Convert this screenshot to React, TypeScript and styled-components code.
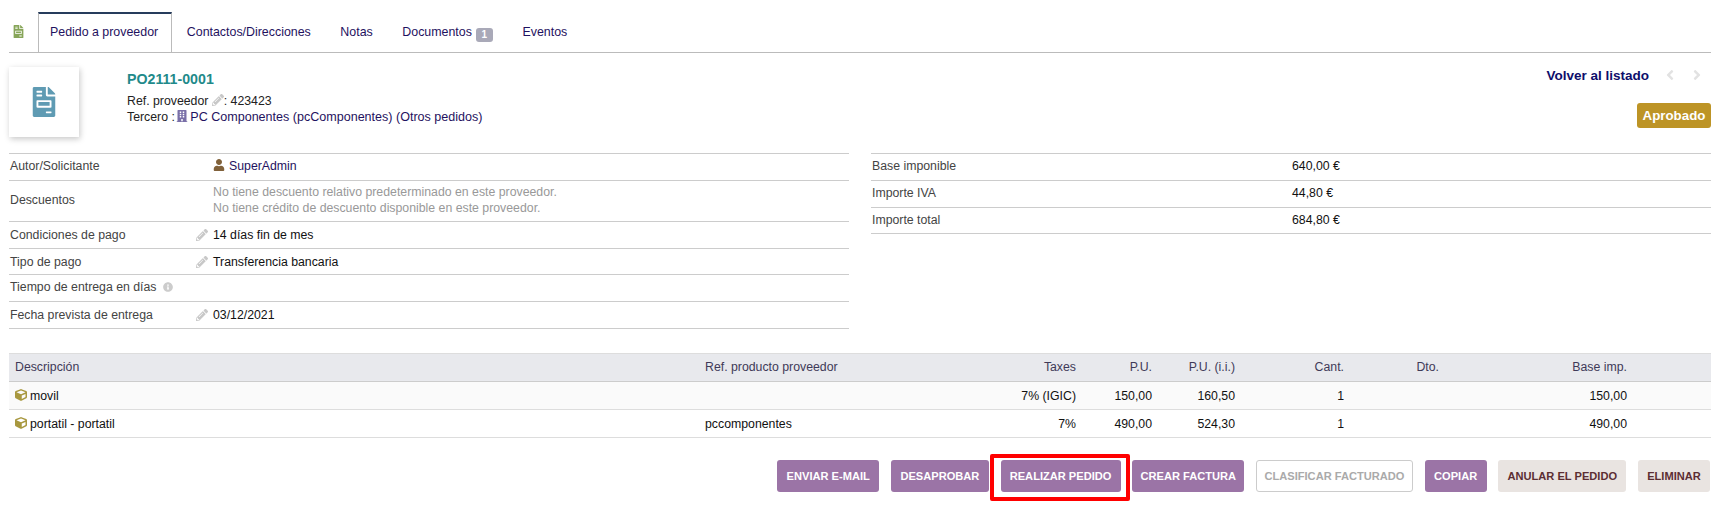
import React from "react";
import styled, { createGlobalStyle } from "styled-components";
import {
    FaAngleLeft,
    FaAngleRight,
    FaBuilding,
    FaCube,
    FaFileInvoice,
    FaInfoCircle,
    FaPencilAlt,
    FaUser,
} from "react-icons/fa";

const GlobalStyle = createGlobalStyle`
    html, body {
        margin: 0;
        padding: 0;
        background: #fff;
        font-family: "Liberation Sans", Arial, sans-serif;
        font-size: 12.3px;
        color: #222;
    }
`;

// product table columns
const lineColumns = "690px 305px 78px 76px 83px 109px 95px 188px 78px";

const Page = styled.div`
    width: 1726px;
    height: 518px;
    padding: 12px 15px 0 9px;
    box-sizing: border-box;
    overflow: hidden;
`;

const Tabs = styled.div`
    display: flex;
    align-items: flex-end;
    height: 40px;
    border-bottom: 1px solid #bbb;
    font-size: 12.4px;
`;

const TabLogo = styled.div`
    width: 29px;
    height: 100%;
    box-sizing: border-box;
    padding: 13px 0 0 3px;
    color: #87a559;
    font-size: 13px;
    svg {
        display: block;
    }
`;

const Tab = styled.div<{ $active?: boolean }>`
    height: 100%;
    box-sizing: border-box;
    padding: ${(p) => (p.$active ? "11px 0 0 11px" : "11px 13.8px 0")};
    ${(p) => (p.$active ? "width: 134px;" : "")}
    color: #1f1260;
    white-space: nowrap;
    border-top: 2px solid ${(p) => (p.$active ? "#263c5c" : "transparent")};
    border-left: 1px solid ${(p) => (p.$active ? "#bbb" : "transparent")};
    border-right: 1px solid ${(p) => (p.$active ? "#bbb" : "transparent")};
`;

const Badge = styled.span`
    display: inline-block;
    margin-left: 4px;
    width: 17px;
    text-align: center;
    border-radius: 3px;
    background: #a9a9b8;
    color: #fff;
    font-size: 10px;
    font-weight: bold;
    line-height: 14px;
    vertical-align: -2px;
`;

const Banner = styled.div`
    display: flex;
    height: 100px;
    padding-top: 14px;
    box-sizing: border-box;
`;

const Thumb = styled.div`
    width: 70px;
    height: 70px;
    display: flex;
    align-items: center;
    justify-content: center;
    color: #5f9bb3;
    font-size: 30px;
    box-shadow: 1px 2px 6px rgba(0, 0, 0, 0.22);
`;

const Ref = styled.div`
    margin-left: 48px;
    padding-top: 4px;
    flex: 1;
    line-height: 16px;
`;

const RefTitle = styled.div`
    color: #1f8a8a;
    font-size: 14.2px;
    font-weight: bold;
    line-height: 16px;
    margin-bottom: 6px;
`;

const Link = styled.span`
    color: #1f1260;
`;

const ThirdParty = styled(Link)`
    font-size: 12.55px;
`;

const Pencil = styled(FaPencilAlt)`
    color: #c8c8c8;
    font-size: 12px;
    vertical-align: -1px;
`;

const Company = styled(FaBuilding)`
    color: #7a70a8;
    font-size: 12px;
    vertical-align: -1px;
    margin: 0 2px 0 -2px;
`;

const Nav = styled.div`
    display: flex;
    flex-direction: column;
    align-items: flex-end;
`;

const BackRow = styled.div`
    display: flex;
    align-items: center;
    height: 16px;
    color: #0e0e6b;
    font-size: 13.5px;
    font-weight: bold;
`;

const Arrows = styled.span`
    display: flex;
    gap: 11px;
    margin: 0 6px 0 13px;
    color: #e2e2e2;
    font-size: 16px;
`;

const Status = styled.div`
    margin-top: 20px;
    width: 74px;
    text-align: center;
    height: 25px;
    line-height: 25px;
    border-radius: 3px;
    background: #bd9426;
    color: #fff;
    font-size: 13.3px;
    font-weight: bold;
`;

const Summary = styled.div`
    display: grid;
    grid-template-columns: 840px 840px;
    justify-content: space-between;
    align-items: start;
`;

const FieldList = styled.div`
    border-top: 1px solid #ccc;
`;

const Field = styled.div<{ $h: number; $valueAt: number; $up?: boolean }>`
    display: grid;
    grid-template-columns: ${(p) => p.$valueAt}px 1fr;
    align-items: center;
    height: ${(p) => p.$h}px;
    box-sizing: border-box;
    border-bottom: 1px solid #ccc;
    padding-left: 1px;
    padding-bottom: ${(p) => (p.$up ? "2px" : "0")};
    color: #444;
`;

const Value = styled.div<{ $dim?: boolean }>`
    color: ${(p) => (p.$dim ? "#999" : "#111")};
    line-height: 16px;
    white-space: nowrap;
`;

const EditValue = styled(Value)`
    margin-left: -17px;
    display: flex;
    align-items: center;
    gap: 5px;
`;

const Person = styled(FaUser)`
    color: #80613a;
    font-size: 12px;
    vertical-align: -1px;
    margin-right: 4px;
`;

const Hint = styled(FaInfoCircle)`
    color: #ccc;
    font-size: 10px;
    margin-left: 6px;
    vertical-align: -1px;
`;

const Lines = styled.div`
    margin-top: 24px;
    border-top: 1px solid #ddd;
`;

const LineRow = styled.div<{ $kind: "head" | "odd" | "even" }>`
    display: grid;
    grid-template-columns: ${lineColumns};
    align-items: center;
    height: 28px;
    box-sizing: border-box;
    padding-bottom: ${(p) => (p.$kind === "head" ? "2px" : "0")};
    border-bottom: 1px solid ${(p) => (p.$kind === "head" ? "#ccc" : "#ddd")};
    background: ${(p) => (p.$kind === "head" ? "#e8e9ed" : p.$kind === "odd" ? "#fafafa" : "#fff")};
    color: ${(p) => (p.$kind === "head" ? "#3f3a58" : "#111")};
`;

const Cell = styled.div<{ $right?: boolean }>`
    padding: 0 6px;
    text-align: ${(p) => (p.$right ? "right" : "left")};
    white-space: nowrap;
`;

const Product = styled(FaCube)`
    color: #a8983f;
    font-size: 12px;
    vertical-align: -1px;
    margin-right: 3px;
`;

const Actions = styled.div`
    display: flex;
    justify-content: flex-end;
    gap: 11.7px;
    margin: 22px 1px 0 0;
`;

const Action = styled.div<{ $w: number; $kind?: "primary" | "off" | "danger"; $marked?: boolean }>`
    position: relative;
    width: ${(p) => p.$w}px;
    height: 32px;
    line-height: 32px;
    border-radius: 3px;
    box-sizing: border-box;
    text-align: center;
    font-size: 11.1px;
    font-weight: bold;
    white-space: nowrap;
    background: ${(p) => (p.$kind === "off" ? "#fff" : p.$kind === "danger" ? "#e9e4e1" : "#9b74a6")};
    color: ${(p) => (p.$kind === "off" ? "#aaa" : p.$kind === "danger" ? "#5c2e33" : "#fff")};
    ${(p) => (p.$kind === "off" ? "border: 1px solid #ccc; line-height: 30px;" : "")}
    ${(p) =>
        p.$marked
            ? `&::after {
                content: "";
                position: absolute;
                top: -6px;
                left: -11px;
                right: -9px;
                bottom: -9px;
                border: 4px solid #f00;
                border-radius: 2px;
            }`
            : ""}
`;

const fields = [
    { label: "Base imponible", value: "640,00 €", h: 27 },
    { label: "Importe IVA", value: "44,80 €", h: 27 },
    { label: "Importe total", value: "684,80 €", h: 26 },
];

const lines = [
    { kind: "odd" as const, name: "movil", ref: "", tax: "7% (IGIC)", pu: "150,00", pui: "160,50", qty: "1", total: "150,00" },
    { kind: "even" as const, name: "portatil - portatil", ref: "pccomponentes", tax: "7%", pu: "490,00", pui: "524,30", qty: "1", total: "490,00" },
];

export default function App() {
    return (
        <Page>
            <GlobalStyle />
            <Tabs>
                <TabLogo>
                    <FaFileInvoice />
                </TabLogo>
                <Tab $active>Pedido a proveedor</Tab>
                <Tab>Contactos/Direcciones</Tab>
                <Tab>Notas</Tab>
                <Tab>
                    Documentos<Badge>1</Badge>
                </Tab>
                <Tab>Eventos</Tab>
            </Tabs>
            <Banner>
                <Thumb>
                    <FaFileInvoice />
                </Thumb>
                <Ref>
                    <RefTitle>PO2111-0001</RefTitle>
                    <div>
                        Ref. proveedor <Pencil />: 423423
                    </div>
                    <div>
                        Tercero : <Company />
                        <ThirdParty>PC Componentes (pcComponentes) (Otros pedidos)</ThirdParty>
                    </div>
                </Ref>
                <Nav>
                    <BackRow>
                        Volver al listado
                        <Arrows>
                            <FaAngleLeft />
                            <FaAngleRight />
                        </Arrows>
                    </BackRow>
                    <Status>Aprobado</Status>
                </Nav>
            </Banner>
            <Summary>
                <FieldList>
                    <Field $h={27} $valueAt={203} $up>
                        Autor/Solicitante
                        <Value>
                            <Person />
                            <Link>SuperAdmin</Link>
                        </Value>
                    </Field>
                    <Field $h={41} $valueAt={203} $up>
                        Descuentos
                        <Value $dim>
                            No tiene descuento relativo predeterminado en este proveedor.
                            <br />
                            No tiene crédito de descuento disponible en este proveedor.
                        </Value>
                    </Field>
                    <Field $h={27} $valueAt={203}>
                        Condiciones de pago
                        <EditValue>
                            <Pencil />
                            14 días fin de mes
                        </EditValue>
                    </Field>
                    <Field $h={26} $valueAt={203}>
                        Tipo de pago
                        <EditValue>
                            <Pencil />
                            Transferencia bancaria
                        </EditValue>
                    </Field>
                    <Field $h={27} $valueAt={203} $up>
                        <span>
                            Tiempo de entrega en días
                            <Hint />
                        </span>
                        <Value />
                    </Field>
                    <Field $h={27} $valueAt={203}>
                        Fecha prevista de entrega
                        <EditValue>
                            <Pencil />
                            03/12/2021
                        </EditValue>
                    </Field>
                </FieldList>
                <FieldList>
                    {fields.map((f) => (
                        <Field key={f.label} $h={f.h} $valueAt={420} $up>
                            {f.label}
                            <Value>{f.value}</Value>
                        </Field>
                    ))}
                </FieldList>
            </Summary>
            <Lines>
                <LineRow $kind="head">
                    <Cell>Descripción</Cell>
                    <Cell>Ref. producto proveedor</Cell>
                    <Cell $right>Taxes</Cell>
                    <Cell $right>P.U.</Cell>
                    <Cell $right>P.U. (i.i.)</Cell>
                    <Cell $right>Cant.</Cell>
                    <Cell $right>Dto.</Cell>
                    <Cell $right>Base imp.</Cell>
                    <Cell />
                </LineRow>
                {lines.map((l) => (
                    <LineRow key={l.name} $kind={l.kind}>
                        <Cell>
                            <Product />
                            {l.name}
                        </Cell>
                        <Cell>{l.ref}</Cell>
                        <Cell $right>{l.tax}</Cell>
                        <Cell $right>{l.pu}</Cell>
                        <Cell $right>{l.pui}</Cell>
                        <Cell $right>{l.qty}</Cell>
                        <Cell $right />
                        <Cell $right>{l.total}</Cell>
                        <Cell />
                    </LineRow>
                ))}
            </Lines>
            <Actions>
                <Action $w={102}>ENVIAR E-MAIL</Action>
                <Action $w={98}>DESAPROBAR</Action>
                <Action $w={120} $marked>
                    REALIZAR PEDIDO
                </Action>
                <Action $w={112}>CREAR FACTURA</Action>
                <Action $w={157} $kind="off">
                    CLASIFICAR FACTURADO
                </Action>
                <Action $w={62}>COPIAR</Action>
                <Action $w={128} $kind="danger">
                    ANULAR EL PEDIDO
                </Action>
                <Action $w={72} $kind="danger">
                    ELIMINAR
                </Action>
            </Actions>
        </Page>
    );
}
